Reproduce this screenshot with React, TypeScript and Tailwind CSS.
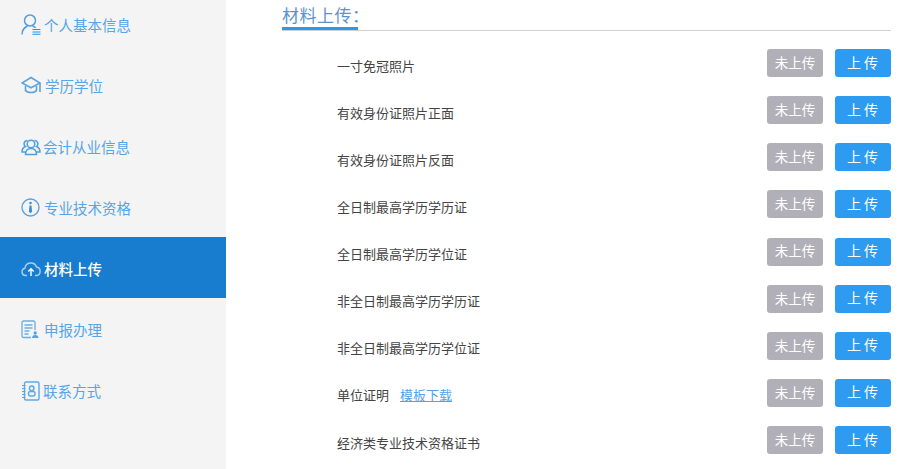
const font = { fontFamily: '"Noto Sans CJK SC", sans-serif' };

function UserListIcon() {
  return (
    <svg width="20" height="21" viewBox="0 0 20 21" fill="none" stroke="#4f9fe0" strokeWidth="1.500">
      <circle cx="9" cy="6.500" r="5.500" />
      <path d="M1 20.500c0-4 2.300-7 5.500-8.500M11.500 12c1.300.4 2.500 1 3.200 1.800" />
      <path d="M11.500 15.500h8M11.500 18h8M11.500 20.300h8" stroke="#2b8fe0" strokeWidth="1.100" />
    </svg>
  );
}

function CapIcon() {
  return (
    <svg width="20" height="19" viewBox="0 0 20 19" fill="none" stroke="#5ba3dc" strokeWidth="1.600">
      <path d="M10 1.500 19 7l-9 4.800L1 7z" />
      <path d="M4.500 10v4.500c2 2.700 9 2.700 11 0V10" />
      <path d="M19 7v9" />
    </svg>
  );
}

function PeopleIcon() {
  return (
    <svg width="20" height="18" viewBox="0 0 20 18" fill="none" stroke="#4f9fe0" strokeWidth="1.500">
      <circle cx="10" cy="6" r="3.800" />
      <path d="M4.500 16.500c0-3.500 2-6 5.500-6s5.500 2.500 5.500 6z" />
      <path d="M6.500 2.500a3.300 3.300 0 0 0-2 6C2 9.500 1 11.500 1 14h3M13.500 2.500a3.300 3.300 0 0 1 2 6c2.500 1 3.500 3 3.500 5.500h-3" />
    </svg>
  );
}

function InfoIcon() {
  return (
    <svg width="19" height="19" viewBox="0 0 19 19" fill="none">
      <circle cx="9.500" cy="9.500" r="8.500" stroke="#5ba3dc" strokeWidth="1.400" />
      <circle cx="9.500" cy="5" r="1.300" fill="#3b8fd6" />
      <path d="M8.500 7.500h2l.6 6-1.600 2-1.600-2z" fill="#3b8fd6" />
    </svg>
  );
}

function CloudIcon() {
  return (
    <svg width="20" height="16" viewBox="0 0 20 16" fill="none" stroke="#a9cfee" strokeWidth="1.400">
      <path d="M6 14.500H4.500a3.700 3.700 0 0 1-.6-7.300A6 6 0 0 1 15.500 6a4.300 4.300 0 0 1 0 8.500H14" />
      <path d="M10 15V8M7.300 10.500 10 7.800l2.700 2.700" stroke="#ffffff" />
    </svg>
  );
}

function FormIcon() {
  return (
    <svg width="19" height="19" viewBox="0 0 19 19" fill="none" stroke="#6aaee2" strokeWidth="1.300">
      <path d="M10 17.500H2.500a1.500 1.500 0 0 1-1.500-1.500V2.500A1.500 1.500 0 0 1 2.500 1h10A1.500 1.500 0 0 1 14 2.500V10" />
      <path d="M3.500 5h8M3.500 8h8M3.500 11h5M3.500 14h4" />
      <circle cx="14.200" cy="13" r="1.700" fill="#5ba3dc" stroke="none" />
      <path d="M11 18c0-2 1.300-3 3.200-3s3.300 1 3.300 3z" fill="#5ba3dc" stroke="none" />
    </svg>
  );
}

function ContactIcon() {
  return (
    <svg width="18" height="20" viewBox="0 0 18 20" fill="none" stroke="#5aaaea" strokeWidth="1.400">
      <rect x="2.500" y="1" width="14.500" height="18" rx="1.500" />
      <path d="M0 4.500h3.500M0 7.500h3.500M0 10.500h3.500M0 13.500h3.500M0 16.500h3.500" strokeWidth="1.200" />
      <circle cx="9.700" cy="7.300" r="2.300" />
      <rect x="6.500" y="10.500" width="6.500" height="4.500" rx="2" />
    </svg>
  );
}

const nav = [
  { label: "个人基本信息", icon: <UserListIcon />, gap: "gap-[3px]", ml: "ml-[21px]" },
  { label: "学历学位", icon: <CapIcon />, gap: "gap-[4px]", ml: "ml-[21px]" },
  { label: "会计从业信息", icon: <PeopleIcon />, gap: "gap-[2px]", ml: "ml-[21px]" },
  { label: "专业技术资格", icon: <InfoIcon />, gap: "gap-[4px]", ml: "ml-[21px]" },
  { label: "材料上传", icon: <CloudIcon />, gap: "gap-[3px]", ml: "ml-[21px]", active: true },
  { label: "申报办理", icon: <FormIcon />, gap: "gap-[4px]", ml: "ml-[21px]" },
  { label: "联系方式", icon: <ContactIcon />, gap: "gap-[3px]", ml: "ml-[22px]" },
];

const rows = [
  "一寸免冠照片",
  "有效身份证照片正面",
  "有效身份证照片反面",
  "全日制最高学历学历证",
  "全日制最高学历学位证",
  "非全日制最高学历学历证",
  "非全日制最高学历学位证",
  "单位证明",
  "经济类专业技术资格证书",
];

export default function App() {
  return (
    <div className="flex h-[469px] w-[903px] overflow-hidden bg-white" style={font}>
      <aside className="h-full w-[226px] shrink-0 bg-[#f4f4f4]">
        <div className="-mt-[7px]">
          {nav.map((item) => (
            <div
              key={item.label}
              className={`flex h-[61px] items-center pt-[2px] ${item.gap} text-[14.500px] ${
                item.active ? "bg-[#187dcf] font-medium text-white" : "text-[#55a5ea]"
              }`}
            >
              <span className={`${item.ml} flex items-center`}>{item.icon}</span>
              <span>{item.label}</span>
            </div>
          ))}
        </div>
      </aside>
      <main className="min-w-0 flex-1 pl-[56px] pr-[12px]">
        <div className="h-[31px] border-b border-[#d0d0d0]">
          <div className="h-[30px] w-[76px] whitespace-nowrap border-b-[3px] border-[#2b98ec] pt-[3px] text-[17px] leading-[24px] tracking-[0.500px] text-[#5b93d1]">
            材料上传：
          </div>
        </div>
        <div className="pt-[18px]">
          {rows.map((r) => (
            <div key={r} className="flex h-[47.130px] items-start justify-between pl-[55px]">
              <div className="flex items-center pt-[5.500px] text-[13px] leading-[22px] text-[#444444]">
                <span>{r}</span>
                {r === "单位证明" && (
                  <a className="ml-[11px] text-[#4ea4ee] underline">模板下载</a>
                )}
              </div>
              <div className="flex gap-[12px]">
                <button className="h-[28px] w-[56px] rounded-[3px] bg-[#b1b0b8] pb-[2px] text-[13.500px] text-white">
                  未上传
                </button>
                <button className="h-[28px] w-[56px] rounded-[3px] bg-[#2d9bf0] pb-[2px] pl-[2px] text-[14px] tracking-[3px] text-white">
                  上传
                </button>
              </div>
            </div>
          ))}
        </div>
      </main>
    </div>
  );
}
